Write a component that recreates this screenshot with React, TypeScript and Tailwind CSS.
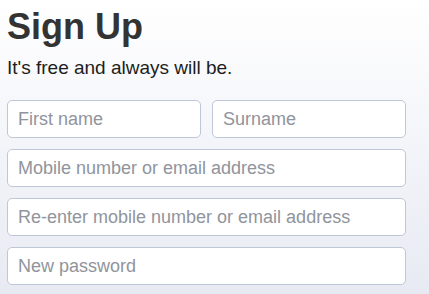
import React from 'react'

const fields = [
  'Mobile number or email address',
  'Re-enter mobile number or email address',
  'New password',
]

function Field({ placeholder, type = 'text' }: { placeholder: string; type?: string }) {
  return (
    <input
      type={type}
      placeholder={placeholder}
      className="h-[38px] w-full min-w-0 rounded-[5px] border border-[#bdc7d8] bg-white px-[10px] text-[18px] text-[#1d2129] placeholder:text-[#90949c] focus:outline-none"
    />
  )
}

export default function App() {
  return (
    <div
      className="min-h-screen bg-gradient-to-b from-white to-[#e8eaf3] px-[7px] pt-[7px]"
      style={{ fontFamily: '"Liberation Sans", Arial, sans-serif' }}
    >
      <div className="w-[399px]">
        {/* Header */}
        <h1 className="text-[36px] font-bold leading-[40px] text-[#333333]">Sign Up</h1>
        <p className="mt-[9px] text-[19px] leading-[24px] text-[#1c1e21]">It's free and always will be.</p>

        {/* Form */}
        <form className="mt-[20px] flex flex-col gap-[11px]" onSubmit={(e) => e.preventDefault()}>
          <div className="flex gap-[11px]">
            <Field placeholder="First name" />
            <Field placeholder="Surname" />
          </div>
          {fields.map((f) => (
            <Field key={f} placeholder={f} type={f === 'New password' ? 'password' : 'text'} />
          ))}
        </form>
      </div>
    </div>
  )
}
